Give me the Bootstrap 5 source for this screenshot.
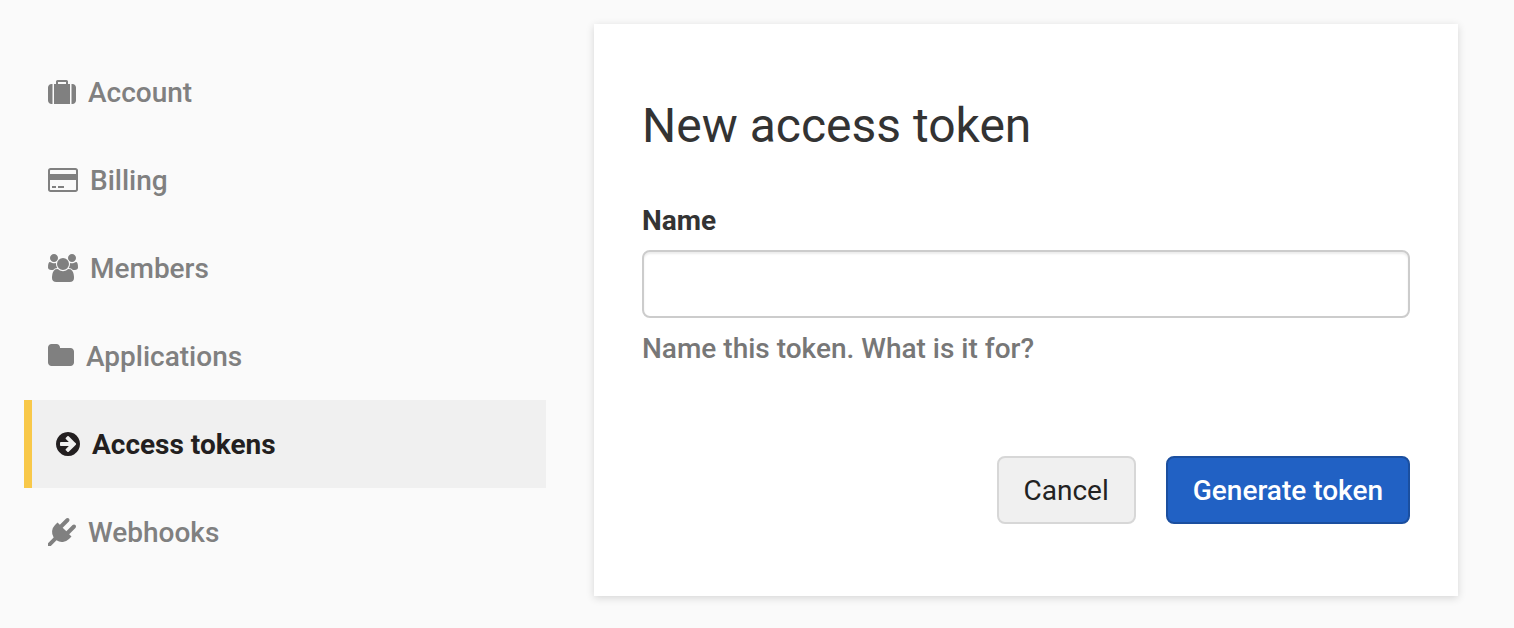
<!DOCTYPE html>
<html lang="en">
<head>
<meta charset="utf-8">
<meta name="viewport" content="width=device-width, initial-scale=1">
<title>New access token</title>
<link rel="stylesheet" href="https://cdn.jsdelivr.net/npm/bootstrap@5.3.0/dist/css/bootstrap.min.css">
<style>
  body { background: #fafafa; color: #333; font-family: Roboto, "Liberation Sans", sans-serif; font-size: 28px; line-height: 40px; }
  .settings { display: grid; grid-template-columns: 29fr 48fr; gap: 48px; padding: 24px 56px 24px 24px; }
  .settings-nav { padding-top: 24px; }
  .settings-nav .nav-link { display: flex; align-items: center; gap: 12px; height: 88px; padding: 0 24px; color: #808080; font-weight: 500; }
  .settings-nav .nav-link span { padding-top: 2px; }
  .settings-nav .nav-link:hover { color: #555; }
  .settings-nav .nav-link.active { border-left: 8px solid #f8c849; background: #f0f0f0; color: #231f20; font-weight: 700; }
  .settings-nav svg { height: 28px; flex: none; fill: currentColor; }
  .panel { background: #fff; padding: 72px 48px; box-shadow: 0 2px 8px rgba(0, 0, 0, .15); }
  .panel h1 { font-size: 48px; line-height: 60px; font-weight: 400; margin-bottom: 45px; }
  .panel .form-label { font-weight: 700; margin-bottom: 9px; display: block; }
  .panel .form-control { height: 68px; border: 2px solid #ccc; border-radius: 8px; font-size: 28px; padding: 12px 24px; box-shadow: inset 0 2px 2px rgba(0, 0, 0, .075); }
  .panel .form-text { font-size: 28px; font-weight: 500; color: #777; margin-top: 11px; }
  .actions { gap: 30px; margin-top: 87px; }
  .actions .btn { font-size: 28px; line-height: 40px; padding: 13px 25px 11px; border-width: 2px; border-radius: 8px; }
  .btn-cancel { background: #f0f0f0; border-color: #d7d7d7; color: #222; }
  .btn-generate { background: #2161c4; border-color: #1b4f9f; color: #fff; font-weight: 500; }
</style>
</head>
<body>
<div class="settings">
  <nav class="settings-nav nav flex-column" aria-label="Settings">
    <a class="nav-link" href="#account"><svg viewBox="0 0 1792 1792" width="28" aria-hidden="true"><path transform="matrix(1 0 0 -1 0 1536)" d="M640 1152h512v128h-512v-128zM288 1152v-1280h-64q-92 0 -158 66t-66 158v832q0 92 66 158t158 66h64zM1408 1152v-1280h-1024v1280h128v160q0 40 28 68t68 28h576q40 0 68 -28t28 -68v-160h128zM1792 928v-832q0 -92 -66 -158t-158 -66h-64v1280h64q92 0 158 -66t66 -158z"/></svg><span>Account</span></a>
    <a class="nav-link" href="#billing"><svg viewBox="0 0 1920 1792" width="30" aria-hidden="true"><path transform="matrix(1 0 0 -1 0 1536)" d="M1760 1408q66 0 113 -47t47 -113v-1216q0 -66 -47 -113t-113 -47h-1600q-66 0 -113 47t-47 113v1216q0 66 47 113t113 47h1600zM160 1280q-13 0 -22.5 -9.5t-9.5 -22.5v-224h1664v224q0 13 -9.5 22.5t-22.5 9.5h-1600zM1760 0q13 0 22.5 9.5t9.5 22.5v608h-1664v-608q0 -13 9.5 -22.5t22.5 -9.5h1600zM256 128v128h256v-128h-256zM640 128v128h384v-128h-384z"/></svg><span>Billing</span></a>
    <a class="nav-link" href="#members"><svg viewBox="0 0 1920 1792" width="30" aria-hidden="true"><path transform="matrix(1 0 0 -1 0 1536)" d="M593 640q-162 -5 -265 -128h-134q-82 0 -138 40.5t-56 118.5q0 353 124 353q6 0 43.5 -21t97.5 -42.5t119 -21.5q67 0 133 23q-5 -37 -5 -66q0 -139 81 -256zM1664 3q0 -120 -73 -189.5t-194 -69.5h-874q-121 0 -194 69.5t-73 189.5q0 53 3.5 103.5t14 109t26.5 108.5t43 97.5t62 81t85.5 53.5t111.5 20q10 0 43 -21.5t73 -48t107 -48t135 -21.5t135 21.5t107 48t73 48t43 21.5q61 0 111.5 -20t85.5 -53.5t62 -81t43 -97.5t26.5 -108.5t14 -109t3.5 -103.5zM640 1280q0 -106 -75 -181t-181 -75t-181 75t-75 181t75 181t181 75t181 -75t75 -181zM1344 896q0 -159 -112.5 -271.5t-271.5 -112.5t-271.5 112.5t-112.5 271.5t112.5 271.5t271.5 112.5t271.5 -112.5t112.5 -271.5zM1920 671q0 -78 -56 -118.5t-138 -40.5h-134q-103 123 -265 128q81 117 81 256q0 29 -5 66q66 -23 133 -23q59 0 119 21.5t97.5 42.5t43.5 21q124 0 124 -353zM1792 1280q0 -106 -75 -181t-181 -75t-181 75t-75 181t75 181t181 75t181 -75t75 -181z"/></svg><span>Members</span></a>
    <a class="nav-link" href="#applications"><svg viewBox="64 0 1664 1792" width="26" aria-hidden="true"><path d="M1728 608v704q0 92-66 158t-158 66h-1216q-92 0-158-66t-66-158v-960q0-92 66-158t158-66h320q92 0 158 66t66 158v32h672q92 0 158 66t66 158z"/></svg><span>Applications</span></a>
    <a class="nav-link active" href="#tokens" aria-current="page"><svg viewBox="128 0 1536 1792" width="24" aria-hidden="true"><path d="M1413 896q0-27-18-45l-91-91-362-362q-18-18-45-18t-45 18l-91 91q-18 18-18 45t18 45l189 189h-502q-26 0-45 19t-19 45v128q0 26 19 45t45 19h502l-189 189q-19 19-19 45t19 45l91 91q18 18 45 18t45-18l362-362 91-91q18-18 18-45zm251 0q0 209-103 385.5t-279.5 279.5-385.5 103-385.5-103-279.5-279.5-103-385.5 103-385.5 279.5-279.5 385.5-103 385.5 103 279.5 279.5 103 385.5z"/></svg><span>Access tokens</span></a>
    <a class="nav-link" href="#webhooks"><svg viewBox="0 0 1792 1792" width="28" aria-hidden="true"><path d="M1755 453q37 38 37 90.5t-37 90.5l-401 400 150 150-160 160q-163 163-389.5 186.5t-411.5-100.5l-362 362h-181v-181l362-362q-124-185-100.5-411.5t186.5-389.5l160-160 150 150 400-401q38-37 91-37t90 37 37 90.5-37 90.5l-400 401 234 234 401-400q38-37 91-37t90 37z"/></svg><span>Webhooks</span></a>
  </nav>
  <main class="panel">
    <h1>New access token</h1>
    <form>
      <label class="form-label" for="token-name">Name</label>
      <input class="form-control" type="text" id="token-name" aria-describedby="token-help">
      <div class="form-text" id="token-help">Name this token. What is it for?</div>
      <div class="actions d-flex justify-content-end">
        <button class="btn btn-cancel" type="button">Cancel</button>
        <button class="btn btn-generate" type="submit">Generate token</button>
      </div>
    </form>
  </main>
</div>
<script src="https://cdn.jsdelivr.net/npm/bootstrap@5.3.0/dist/js/bootstrap.bundle.min.js"></script>
</body>
</html>
